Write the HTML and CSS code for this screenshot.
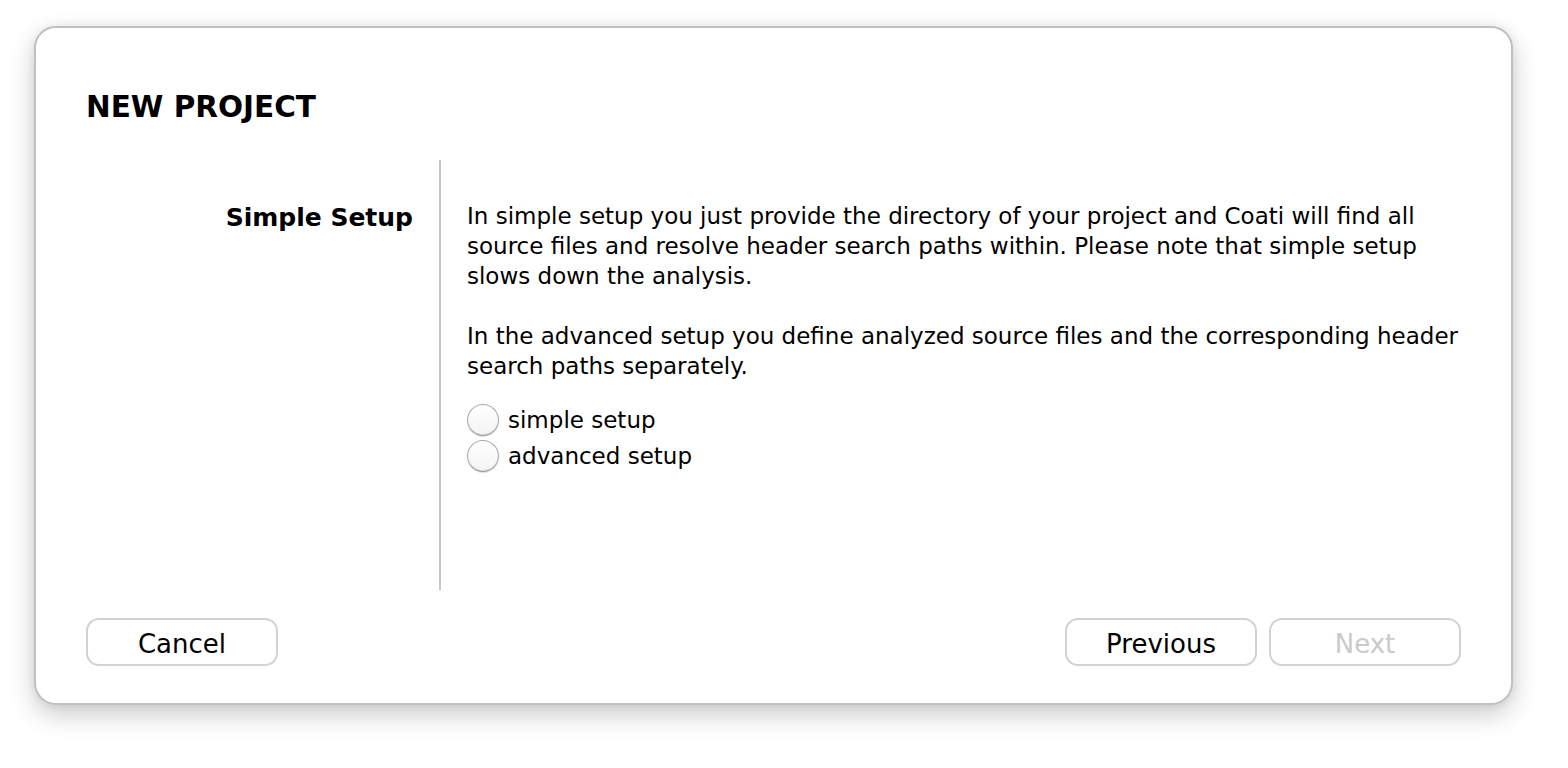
FILE: index.html
```html
<!DOCTYPE html>
<html lang="en">
<head>
<meta charset="utf-8">
<title>New Project</title>
<link rel="stylesheet" href="styles.css">
</head>
<body>
<div class="dialog">
  <h1 class="title">NEW PROJECT</h1>
  <div class="content">
    <div class="side">
      <h2 class="side-title">Simple Setup</h2>
    </div>
    <div class="divider"></div>
    <div class="main">
      <p class="para">In simple setup you just provide the directory of your project and Coati will find all<br>source files and resolve header search paths within. Please note that simple setup<br>slows down the analysis.</p>
      <p class="para">In the advanced setup you define analyzed source files and the corresponding header<br>search paths separately.</p>
      <div class="options">
        <label class="option"><span class="radio"></span><span class="option-label">simple setup</span></label>
        <label class="option"><span class="radio"></span><span class="option-label">advanced setup</span></label>
      </div>
    </div>
  </div>
  <div class="footer">
    <button class="btn">Cancel</button>
    <div class="nav">
      <button class="btn">Previous</button>
      <button class="btn btn-disabled">Next</button>
    </div>
  </div>
</div>
</body>
</html>
```
FILE: styles.css
```css
html, body {
  margin: 0;
  background: #ffffff;
}

body {
  box-sizing: border-box;
  min-height: 768px;
  padding: 26px 0 0 34px;
  font-family: "DejaVu Sans", "Liberation Sans", sans-serif;
  color: #000;
}

.dialog {
  box-sizing: border-box;
  width: 1479px;
  height: 679px;
  border: 2px solid #c0c0c0;
  border-radius: 22px;
  background: #fff;
  box-shadow: 0 10px 26px rgba(0, 0, 0, 0.20), 0 0 10px rgba(0, 0, 0, 0.07);
  padding: 61px 50px 37px 50px;
  display: flex;
  flex-direction: column;
}

.title {
  margin: 0;
  font-size: 29.5px;
  line-height: 36px;
  font-weight: bold;
  height: 36px;
}

.content {
  margin-top: 35px;
  height: 430px;
  display: flex;
}

.side {
  width: 327px;
  padding-top: 43px;
  box-sizing: border-box;
  text-align: right;
}

.side-title {
  margin: 0;
  font-size: 25px;
  line-height: 30px;
  font-weight: bold;
}

.divider {
  width: 2px;
  background: #c6c6c6;
  margin: 0 26px;
}

.main {
  flex: 1;
  padding-top: 41px;
  font-size: 23px;
  line-height: 30px;
}

.para {
  margin: 0 0 30px 0;
  white-space: nowrap;
}

.para + .para {
  margin-bottom: 0;
}

.options {
  margin-top: 21px;
  display: flex;
  flex-direction: column;
}

.option {
  height: 36px;
  display: flex;
  align-items: center;
  gap: 9px;
}

.radio {
  box-sizing: border-box;
  width: 32px;
  height: 32px;
  border-radius: 50%;
  border: 1px solid #a9a9a9;
  border-bottom-color: #9a9a9a;
  background: linear-gradient(#ffffff, #f4f4f4);
  box-shadow: inset 0 -1px 1px rgba(0, 0, 0, 0.08), 0 1px 1px rgba(0, 0, 0, 0.12);
}

.option-label {
  line-height: 30px;
}

.footer {
  margin-top: 28px;
  display: flex;
  justify-content: space-between;
}

.nav {
  display: flex;
  gap: 12px;
}

.btn {
  box-sizing: border-box;
  width: 192px;
  height: 48px;
  border: 2px solid #d2d2d2;
  border-radius: 13px;
  background: #fff;
  font-family: "DejaVu Sans", "Liberation Sans", sans-serif;
  font-size: 26px;
  color: #000;
  padding: 3px 0 0 0;
}

.btn-disabled {
  color: #cacaca;
}
```
